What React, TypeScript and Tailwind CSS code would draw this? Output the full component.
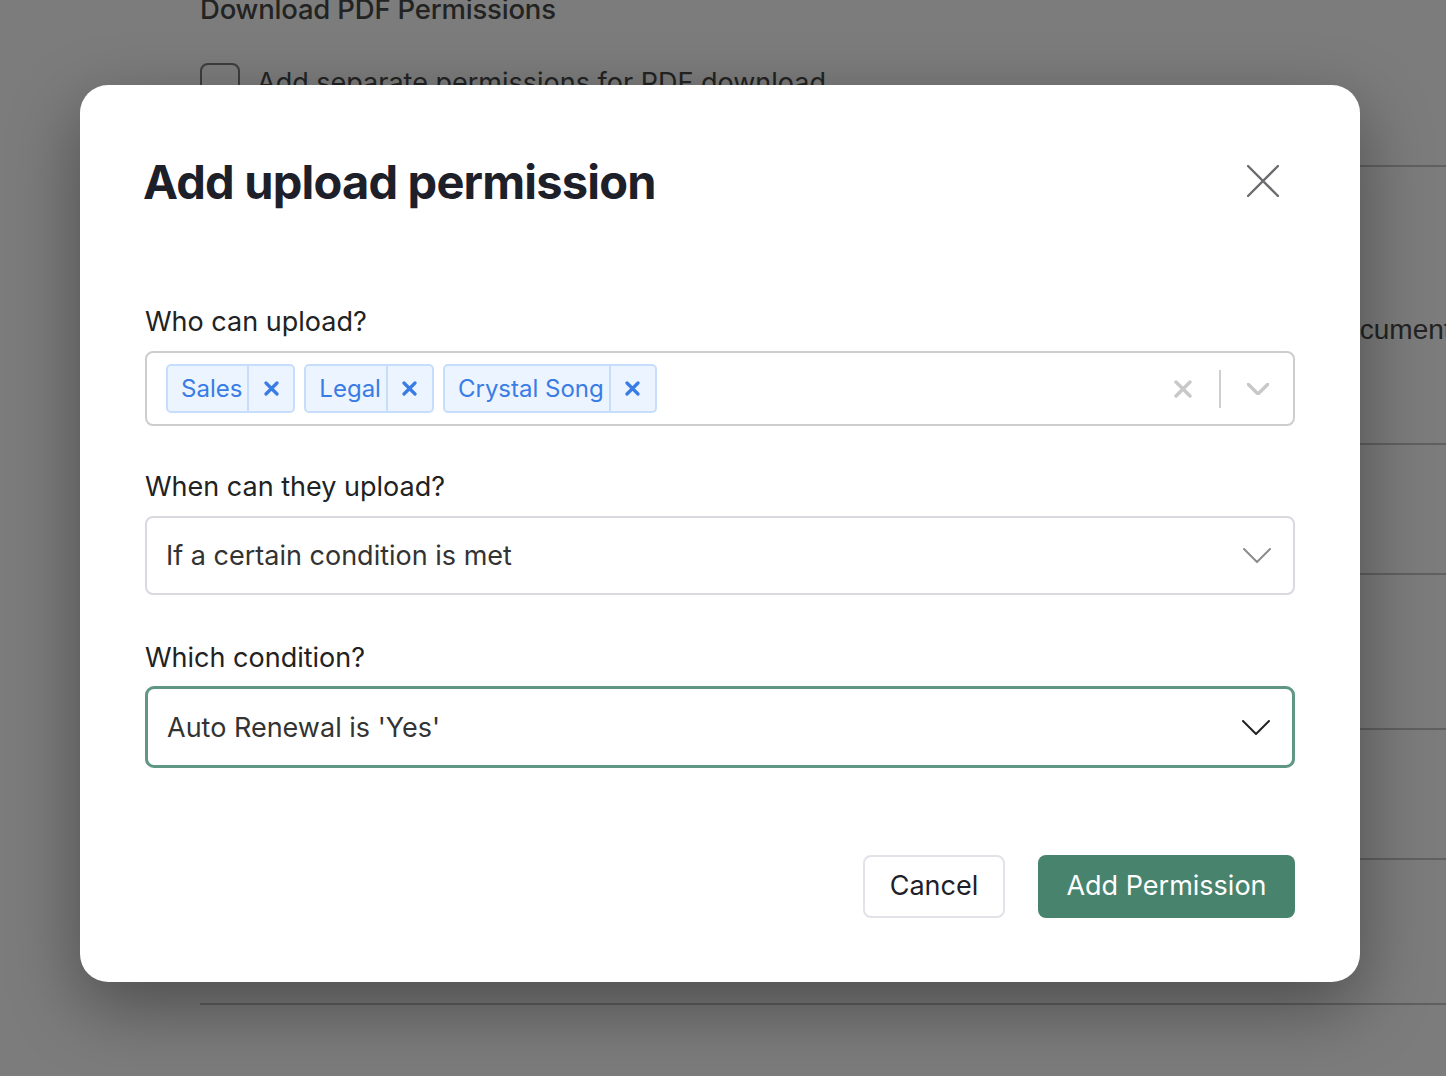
import React from "react";

const font = { fontFamily: "Inter, 'Noto Sans', sans-serif" };

function Tag({ label }: { label: string }) {
  return (
    <div className="flex h-[49px] items-stretch rounded-[5px] border-2 border-[#c6ddfb] bg-[#ebf4ff] text-[#3a7ce6]">
      <span className="flex items-center pl-[13px] pr-[5px] text-[24px] leading-none">{label}</span>
      <span className="flex w-[46px] items-center justify-center border-l-2 border-[#c6ddfb]">
        <svg width="15" height="15" viewBox="0 0 15 15">
          <path d="M2 2 L13 13 M13 2 L2 13" stroke="#3a7ce6" strokeWidth="3.2" strokeLinecap="round" />
        </svg>
      </span>
    </div>
  );
}

function Chevron({ color, w = 28, h = 15, sw = 2 }: { color: string; w?: number; h?: number; sw?: number }) {
  return (
    <svg width={w} height={h} viewBox={`0 0 ${w} ${h}`}>
      <path d={`M1 1 L${w / 2} ${h - 1} L${w - 1} 1`} fill="none" stroke={color} strokeWidth={sw} strokeLinecap="round" strokeLinejoin="round" />
    </svg>
  );
}

export default function App() {
  return (
    <div className="relative h-[1076px] w-[1446px] overflow-hidden bg-[#7b7c7b]" style={font}>
      {/* background page */}
      <div className="flex flex-col pl-[200px] text-[#222322]">
        <div className="h-[167px] border-b-2 border-[#5f605f]">
          <div className="mt-[-11px] text-[27.5px] font-medium leading-[40px] tracking-[-0.2px]">Download PDF Permissions</div>
          <div className="mt-[34px] flex items-center gap-[17px]">
            <div className="h-[40px] w-[40px] rounded-[8px] border-2 border-[#3c3d3c]"></div>
            <span className="text-[27px] leading-[40px]">Add separate permissions for PDF download</span>
          </div>
        </div>
        <div className="h-[278px] border-b-2 border-[#5f605f] pt-[145px]">
          <div className="ml-[1124px] whitespace-nowrap text-[28px] leading-[36px]" style={{ fontFamily: "'Liberation Sans', Arial, sans-serif" }}>
            Document
          </div>
        </div>
        <div className="h-[130px] border-b-2 border-[#5f605f]"></div>
        <div className="h-[155px] border-b-2 border-[#5f605f]"></div>
        <div className="h-[130px] border-b-2 border-[#5f605f]"></div>
        <div className="h-[145px] border-b-2 border-[#5f605f]"></div>
      </div>

      {/* overlay */}
      <div className="absolute inset-0 pl-[80px] pt-[85px]">
        <div className="flex h-[897px] w-[1280px] flex-col rounded-[28px] bg-white px-[65px] pt-[62px] shadow-[0_24px_70px_rgba(0,0,0,0.38)]">
          <div className="flex h-[68px] items-center justify-between">
            <h2 className="ml-[-2px] text-[47px] font-bold leading-none tracking-[-0.8px] text-[#1d2029]">Add upload permission</h2>
            <svg width="32" height="32" viewBox="0 0 32 32" className="mr-[16px] mt-[-1px]">
              <path d="M1 1 L31 31 M31 1 L1 31" stroke="#6c6c70" strokeWidth="2.4" strokeLinecap="round" />
            </svg>
          </div>

          <label className="mt-[86px] block text-[27px] leading-[42px] text-[#222]">Who can upload?</label>
          <div className="mt-[8px] flex h-[75px] items-center rounded-[8px] border-2 border-[#cdcdcd] pl-[19px] pr-[24px]">
            <div className="flex flex-1 items-center gap-[9px]">
              <Tag label="Sales" />
              <Tag label="Legal" />
              <Tag label="Crystal Song" />
            </div>
            <svg width="18" height="18" viewBox="0 0 18 18" className="mr-[27px]">
              <path d="M2 2 L16 16 M16 2 L2 16" stroke="#c8c8c8" strokeWidth="3.4" strokeLinecap="round" />
            </svg>
            <div className="h-[38px] w-[2px] bg-[#cfcfcf]"></div>
            <div className="ml-[26px]">
              <Chevron color="#c8c8c8" w={22} h={12} sw={3.4} />
            </div>
          </div>

          <label className="mt-[40px] block text-[27px] leading-[42px] text-[#222]">When can they upload?</label>
          <div className="mt-[8px] flex h-[79px] items-center justify-between rounded-[8px] border-2 border-[#d9d9df] pl-[19px] pr-[22px]">
            <span className="mt-[2px] text-[27px] text-[#333]">If a certain condition is met</span>
            <Chevron color="#8c8c8c" />
          </div>

          <label className="mt-[42px] block text-[27px] leading-[42px] text-[#222]">Which condition?</label>
          <div className="mt-[7px] flex h-[82px] items-center justify-between rounded-[9px] border-[3px] border-[#5f9784] pl-[19px] pr-[22px]">
            <span className="mt-[2px] text-[27px] text-[#333]">Auto Renewal is 'Yes'</span>
            <Chevron color="#222" />
          </div>

          <div className="mt-[87px] flex justify-end gap-[33px]">
            <button className="h-[63px] w-[142px] rounded-[8px] border-2 border-[#e2e2e8] bg-white text-[27px] text-[#1d2029]">Cancel</button>
            <button className="h-[63px] w-[257px] rounded-[8px] bg-[#48836d] text-[27px] text-white">Add Permission</button>
          </div>
        </div>
      </div>
    </div>
  );
}
